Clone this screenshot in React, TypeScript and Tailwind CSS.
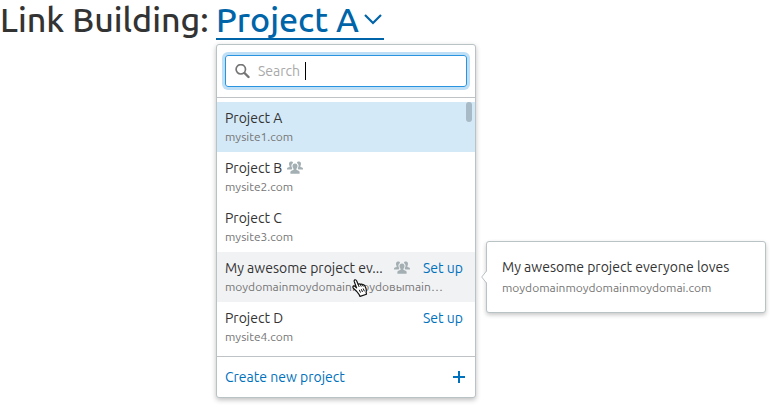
import React from "react";

type Project = {
  name: string;
  domain: string;
  shared?: boolean;
  setup?: boolean;
  state?: "selected" | "hovered";
};

const projects: Project[] = [
  { name: "Project A", domain: "mysite1.com", state: "selected" },
  { name: "Project B", domain: "mysite2.com", shared: true },
  { name: "Project C", domain: "mysite3.com" },
  {
    name: "My awesome project ev...",
    domain: "moydomainmoydomainmoydовыmain…",
    shared: true,
    setup: true,
    state: "hovered",
  },
  { name: "Project D", domain: "mysite4.com", setup: true },
];

function SharedIcon() {
  return (
    <svg viewBox="0 0 16 14" className="h-[14px] w-4 shrink-0" fill="#a3afb3" aria-label="Shared project">
      <path d="M2.300 1.600C2.800.8 3.500.6 4.200.6c.9 0 1.700.4 1.900 1.300C5 2.500 4.400 3.500 4.400 4.700c0 1 .3 1.800.9 2.500L4.600 8.500H0V7.800c0-.6.300-1 .9-1.200l1.700-.7V5.100C2 4.400 1.800 2.600 2.300 1.600z" />
      <path d="M13.700 1.600C13.200.8 12.500.6 11.800.6c-.9 0-1.700.4-1.900 1.300 1.100.6 1.700 1.600 1.700 2.800 0 1-.3 1.800-.9 2.500l.7 1.300H16V7.800c0-.6-.3-1-.9-1.200l-1.700-.7V5.100c.6-.7.8-2.500.3-3.500z" />
      <path d="M8 2.500c1.600 0 2.500.9 2.500 2.500 0 1.100-.4 2.100-1.100 2.700v1.100l2.200.9c.7.300 1 .7 1 1.300v1.700H3.400V11c0-.6.3-1 1-1.300l2.200-.9V7.700C5.900 7.100 5.500 6.100 5.500 5 5.500 3.400 6.400 2.500 8 2.500z" />
    </svg>
  );
}

function HandCursor() {
  return (
    <svg viewBox="0 0 16 18" className="pointer-events-none absolute top-[27px] left-[135px] h-[18px] w-4" aria-hidden="true">
      <path
        d="M4.800 12.500 1.300 9.200C.6 8.300.8 7.400 1.500 7.100c.7-.3 1.500.1 2.200.9l.9.9L2.300 2.700C2 1.700 2.300 1 3 .8c.7-.2 1.300.2 1.700 1.100l1.500 3.600c.2-.7 1.700-.9 2.200.1.500-.7 1.700-.6 2.200.3.700-.5 1.600-.2 2.100.7l1.200 2.700c.5 1.500.5 2.700.2 4.200l.4 1.700-6.500 2.200-.8-1.700z"
        fill="#fff"
        stroke="#111"
        strokeWidth="1.200"
        strokeLinejoin="round"
      />
      <path d="m6.200 5.500 1 2.500M8.400 5.600l.9 2M10.600 5.900l.7 1.600M7.300 10.800l1.200 2.800M9.300 10.200l1.200 2.800M11.200 9.500l1.200 2.800" stroke="#111" strokeWidth="1" fill="none" />
    </svg>
  );
}

function Tooltip() {
  return (
    <div
      role="tooltip"
      className="absolute -top-[11px] left-[269px] w-[280px] rounded-[3px] border border-[#b9c2c5] bg-white px-[15px] pt-[15px] pb-[13px] shadow-[0_2px_4px_rgba(0,0,0,0.22)]"
    >
      <svg viewBox="0 0 7 18" className="absolute top-[26px] -left-[6px] h-[18px] w-[7px]" aria-hidden="true">
        <path d="M7 1.500.8 9 7 16.500z" fill="#fff" />
        <path d="M5.500 1.500V3L.7 9l4.800 6v1.500" fill="none" stroke="#b9c2c5" />
      </svg>
      <p className="text-sm leading-5 whitespace-nowrap text-[#333]">My awesome project everyone loves</p>
      <p className="text-xs leading-[22px] whitespace-nowrap text-[#757575]">moydomainmoydomainmoydomai.com</p>
    </div>
  );
}

function ProjectRow({ project }: { project: Project }) {
  const background =
    project.state === "selected" ? "bg-[#d4e9f7]" : project.state === "hovered" ? "bg-[#f1f2f4]" : "bg-white";
  return (
    <li className={`relative px-2 py-[6px] ${background}`}>
      <div className="flex items-center justify-between pr-1">
        <div className="flex min-w-0 items-center gap-[5px]">
          <a
            href="#"
            className={`text-sm leading-5 whitespace-nowrap text-[#333] ${project.setup ? "w-[164px]" : ""}`}
          >
            {project.name}
          </a>
          {project.shared && <SharedIcon />}
        </div>
        {project.setup && (
          <button type="button" className="shrink-0 text-sm leading-5 text-[#0071bc]">
            Set up
          </button>
        )}
      </div>
      <p className="text-xs leading-[18px] whitespace-nowrap text-[#757575]">{project.domain}</p>
      {project.state === "hovered" && (
        <>
          <HandCursor />
          <Tooltip />
        </>
      )}
    </li>
  );
}

function ProjectMenu() {
  return (
    <div className="absolute top-full left-0 mt-1 w-[260px] rounded-[3px] border border-[#b9c2c5] bg-white shadow-[0_2px_5px_rgba(0,0,0,0.25)]">
      <div className="border-b border-[#bfc3c5] px-2 py-[10px]">
        <label className="relative flex h-8 items-center gap-2 rounded-[3px] border border-[#2b94e1] px-[9px] shadow-[0_0_0_3px_#bfdff6]">
          <svg viewBox="0 0 15 15" className="size-[15px] shrink-0" fill="none" stroke="#757575" aria-hidden="true">
            <circle cx="5.800" cy="5.300" r="4.700" strokeWidth="1.700" />
            <path d="m9.500 9 4 4" strokeWidth="2.400" strokeLinecap="round" />
          </svg>
          <input
            type="text"
            aria-label="Search projects"
            placeholder="Search"
            className="min-w-0 flex-1 bg-transparent text-sm leading-5 outline-none placeholder:text-[#a9a9a9]"
          />
          <span className="absolute top-[6px] left-[79px] h-[18px] w-px bg-black" />
        </label>
      </div>
      <div className="relative py-1">
        <ul>
          {projects.map((project) => (
            <ProjectRow key={project.name} project={project} />
          ))}
        </ul>
        <span className="absolute top-1 right-[3px] h-5 w-[6px] rounded-full bg-[#a8bac5]" />
      </div>
      <button
        type="button"
        className="flex h-[41px] w-full items-center justify-between border-t border-[#bfc3c5] px-2 text-sm leading-5 text-[#0071bc]"
      >
        Create new project
        <svg viewBox="0 0 12 12" className="mr-[2px] size-3" aria-hidden="true">
          <path d="M6 0v12M0 6h12" stroke="#0071bc" strokeWidth="2" />
        </svg>
      </button>
    </div>
  );
}

export default function App() {
  return (
    <main className="min-h-screen bg-white font-['Ubuntu','Noto_Sans',sans-serif]">
      <header className="flex">
        <h1 className="w-[216px] shrink-0 text-[34px] leading-[38px] font-medium whitespace-nowrap text-[#333]">
          Link Building:
        </h1>
        <div className="relative">
          <button
            type="button"
            className="flex h-10 w-[168px] items-center justify-between border-b-2 border-[#0064a8] text-[34px] leading-[38px] font-medium whitespace-nowrap text-[#0064a8]"
          >
            Project A
            <svg viewBox="0 0 18 11" className="mr-[2px] h-[11px] w-[18px]" fill="none" aria-hidden="true">
              <path d="m1 1 8 8 8-8" stroke="#0064a8" strokeWidth="2.200" />
            </svg>
          </button>
          <ProjectMenu />
        </div>
      </header>
    </main>
  );
}
